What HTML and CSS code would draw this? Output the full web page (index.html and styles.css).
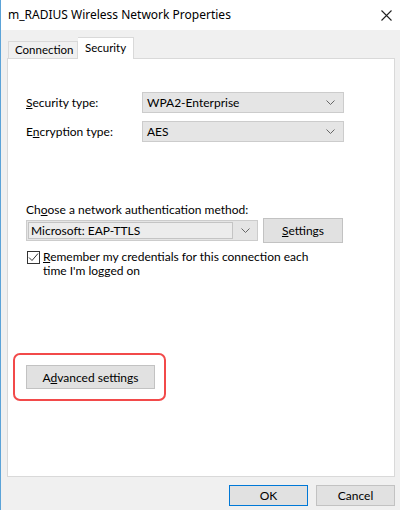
FILE: index.html
```html
<!DOCTYPE html>
<html lang="en">

<head>
    <meta charset="UTF-8">
    <meta name="viewport" content="width=device-width, initial-scale=1.0">
    <title>m_RADIUS Wireless Network Properties</title>
    <link rel="stylesheet" href="styles.css">
</head>

<body>
    <div class="window">
        <div class="titlebar">
            <span class="title">m_RADIUS Wireless Network Properties</span>
            <svg class="close" width="11" height="11" viewBox="0 0 11 11">
                <path d="M0.5 0.5 L10.5 10.5 M10.5 0.5 L0.5 10.5" stroke="#222" stroke-width="1.1" fill="none" />
            </svg>
        </div>

        <div class="content">
            <div class="tabs">
                <div class="tab">Connection</div>
                <div class="tab active">Security</div>
            </div>

            <div class="panel">
                <div class="field-row">
                    <label class="field-label"><u>S</u>ecurity type:</label>
                    <div class="dropdown">
                        <span>WPA2-Enterprise</span>
                        <svg width="9" height="5" viewBox="0 0 9 5"><path d="M0.5 0.5 L4.5 4.5 L8.5 0.5" stroke="#666" fill="none" /></svg>
                    </div>
                </div>
                <div class="field-row">
                    <label class="field-label">E<u>n</u>cryption type:</label>
                    <div class="dropdown">
                        <span>AES</span>
                        <svg width="9" height="5" viewBox="0 0 9 5"><path d="M0.5 0.5 L4.5 4.5 L8.5 0.5" stroke="#666" fill="none" /></svg>
                    </div>
                </div>

                <div class="method-label">Ch<u>o</u>ose a network authentication method:</div>
                <div class="method-row">
                    <div class="combo">
                        <div class="combo-text">Microsoft: EAP-TTLS</div>
                        <svg width="9" height="5" viewBox="0 0 9 5"><path d="M0.5 0.5 L4.5 4.5 L8.5 0.5" stroke="#666" fill="none" /></svg>
                    </div>
                    <button class="btn settings-btn"><u>S</u>ettings</button>
                </div>

                <div class="check-row">
                    <span class="checkbox">
                        <svg width="11" height="11" viewBox="0 0 11 11"><path d="M1 5.5 L4 8.5 L10 1.5" stroke="#333" stroke-width="1" fill="none" /></svg>
                    </span>
                    <span class="check-text"><u>R</u>emember my credentials for this connection each time I'm logged on</span>
                </div>

                <div class="highlight">
                    <button class="btn advanced-btn">A<u>d</u>vanced settings</button>
                </div>
            </div>

            <div class="footer">
                <button class="btn dialog-btn default">OK</button>
                <button class="btn dialog-btn">Cancel</button>
            </div>
        </div>
    </div>
</body>

</html>
```

FILE: styles.css
```css
body {
    margin: 0;
    font-family: Lato, "Noto Sans", sans-serif;
    font-size: 12px;
    line-height: 16px;
    color: #000;
}

.window {
    width: 399px;
    height: 510px;
    display: flex;
    flex-direction: column;
    border-left: 1px solid #5ba3d8;
    background-color: #f0f0f0;
    overflow: hidden;
}

.titlebar {
    height: 30px;
    background-color: #fff;
    display: flex;
    align-items: center;
    justify-content: space-between;
    padding: 0 8px 0 7px;
    flex-shrink: 0;
}

.title {
    font-family: "Noto Sans", sans-serif;
    font-size: 12px;
    padding-bottom: 1px;
}

.content {
    flex: 1;
    display: flex;
    flex-direction: column;
    padding: 0 5px 0 6px;
}

.tabs {
    height: 28px;
    display: flex;
    align-items: flex-end;
    padding-left: 1px;
    flex-shrink: 0;
}

.tab {
    width: 70px;
    height: 17px;
    box-sizing: border-box;
    padding-left: 6px;
    font-size: 11.5px;
    line-height: 16px;
    white-space: nowrap;
    border: 1px solid #d9d9d9;
    border-bottom: none;
    background-color: #f0f0f0;
}

.tab.active {
    width: 56px;
    height: 22px;
    line-height: 19px;
    padding-left: 7px;
    background-color: #fff;
    border-left: none;
    margin-bottom: -1px;
    position: relative;
    z-index: 1;
}

.panel {
    height: 419px;
    box-sizing: border-box;
    flex-shrink: 0;
    background-color: #fff;
    border: 1px solid #d9d9d9;
    padding: 33px 0 0 18px;
}

.field-row {
    display: flex;
    align-items: center;
    margin-bottom: 8px;
}

.field-label {
    width: 116px;
}

.dropdown {
    width: 188px;
    height: 19px;
    border: 1px solid #cccccc;
    background-color: #e5e5e5;
    display: flex;
    align-items: center;
    justify-content: space-between;
    padding: 0 8px 0 4px;
}

.method-label {
    margin-top: 60px;
    height: 16px;
}

.method-row {
    display: flex;
    align-items: center;
    height: 25px;
}

.combo {
    width: 230px;
    height: 19px;
    border: 1px solid #cccccc;
    background-color: #e5e5e5;
    display: flex;
    align-items: center;
}

.combo-text {
    width: 205px;
    height: 17px;
    line-height: 15px;
    margin-left: 1px;
    margin-right: 8px;
    padding-left: 2px;
    border: 1px solid #c4c4c4;
    background-color: #ececec;
    box-sizing: border-box;
}

.btn {
    font-family: Lato, "Noto Sans", sans-serif;
    font-size: 12px;
    color: #000;
    background-color: #e1e1e1;
    border: 1px solid #c2c2c2;
    padding: 0;
    cursor: pointer;
}

.settings-btn {
    width: 80px;
    height: 25px;
    margin-left: 5px;
}

.check-row {
    display: flex;
    align-items: flex-start;
    margin-top: 7px;
    padding-left: 1px;
}

.checkbox {
    width: 11px;
    height: 11px;
    border: 1px solid #333;
    display: flex;
    margin-top: 1px;
    flex-shrink: 0;
}

.check-text {
    width: 285px;
    margin-left: 3px;
    line-height: 14px;
}

.highlight {
    display: inline-flex;
    margin: 75px 0 0 -13px;
    padding: 10px 9px 10px 11px;
    border: 2px solid #f24a4a;
    border-radius: 7px;
}

.advanced-btn {
    width: 129px;
    height: 24px;
}

.footer {
    display: flex;
    justify-content: flex-end;
    gap: 8px;
    padding-top: 8px;
}

.dialog-btn {
    width: 79px;
    height: 21px;
}

.dialog-btn.default {
    border-color: #0078d7;
}
```
